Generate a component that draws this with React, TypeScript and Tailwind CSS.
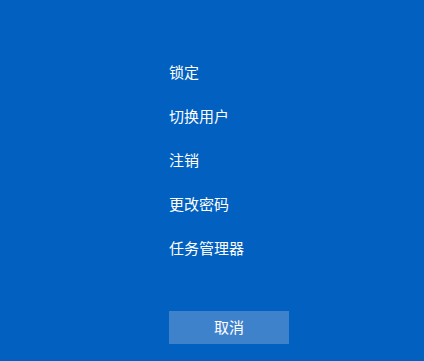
import React from 'react';

const items = ['锁定', '切换用户', '注销', '更改密码', '任务管理器'];

export default function App() {
  return (
    <div
      className="w-[424px] h-[361px] bg-[#0160c0] text-white flex flex-col pl-[169px] pt-[62px]"
      style={{ fontFamily: '"Noto Sans CJK SC", "Microsoft YaHei", sans-serif' }}
    >
      <ul className="flex flex-col gap-[24px]">
        {items.map(t => (
          <li key={t} className="text-[15px] leading-[20px] h-[20px]">{t}</li>
        ))}
      </ul>
      <button className="mt-[53px] w-[120px] h-[33px] bg-[#3f82cc] text-[15px] text-white">
        取消
      </button>
    </div>
  );
}
